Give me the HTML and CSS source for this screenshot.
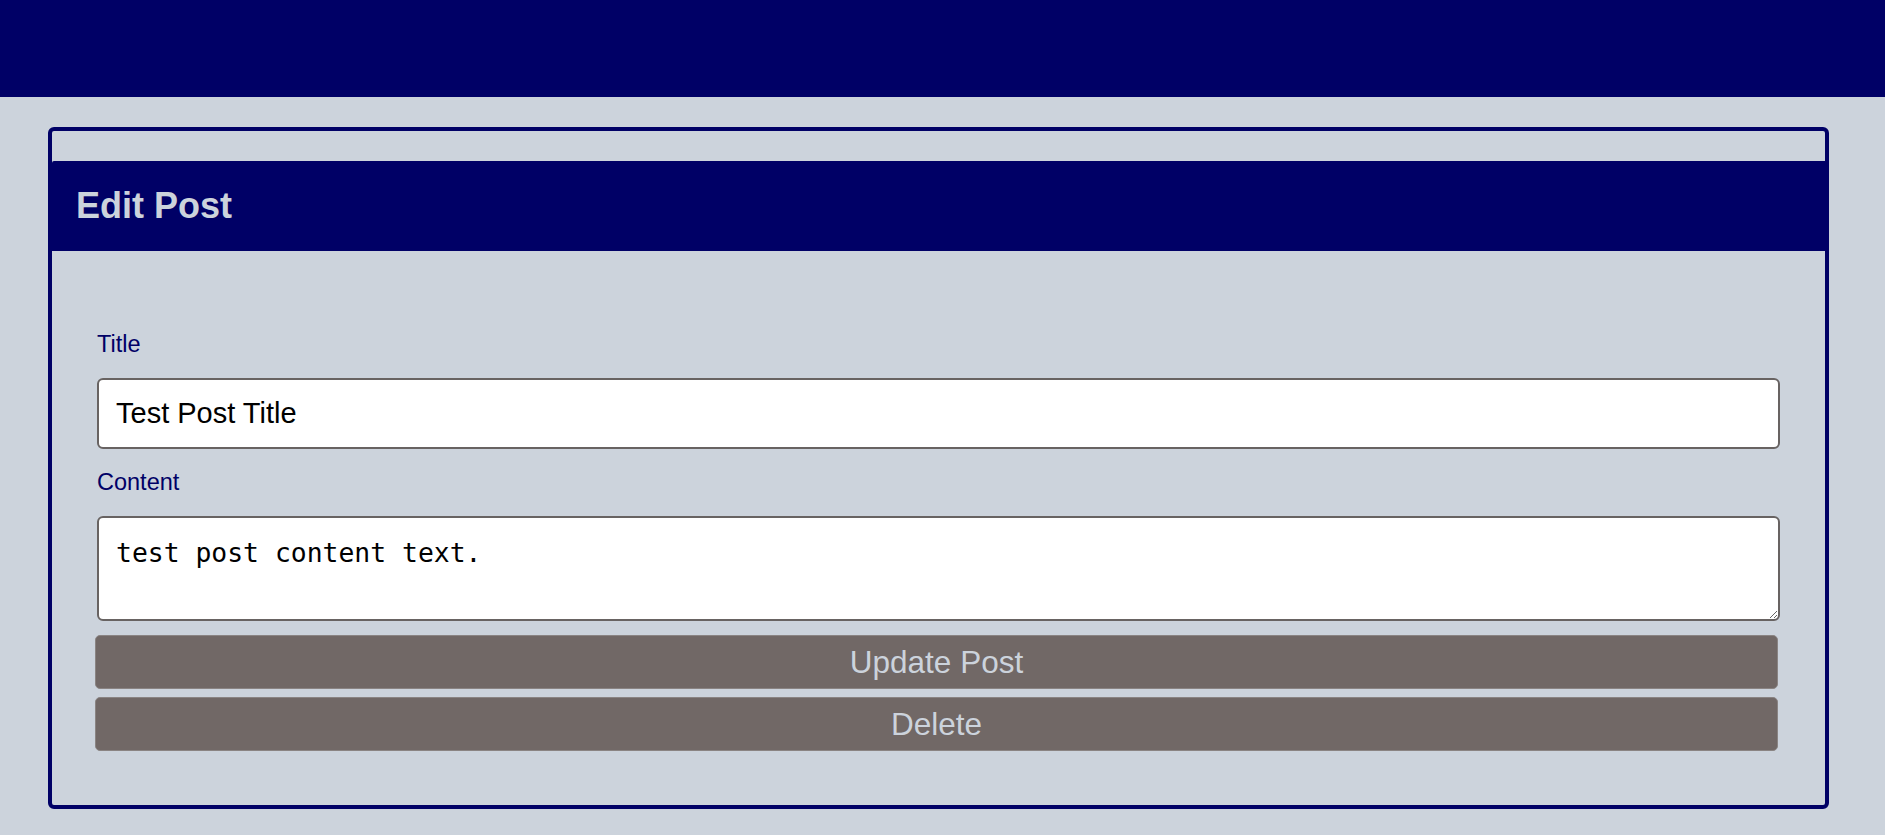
FILE: index.html
```html
<!DOCTYPE html>
<html lang="en">
<head>
<meta charset="utf-8">
<title>Edit Post</title>
<link rel="stylesheet" href="styles.css">
</head>
<body>
<header class="topbar"></header>
<main class="page">
  <section class="card">
    <div class="card-header">
      <h1 class="card-title">Edit Post</h1>
    </div>
    <form class="card-body">
      <label class="field-label" for="title">Title</label>
      <input class="field-input" id="title" type="text" value="Test Post Title">
      <label class="field-label" for="content">Content</label>
      <textarea class="field-textarea" id="content">test post content text.</textarea>
      <button class="btn btn-update" type="button">Update Post</button>
      <button class="btn" type="button">Delete</button>
    </form>
  </section>
</main>
</body>
</html>
```

FILE: styles.css
```css
html, body {
  margin: 0;
  padding: 0;
}

body {
  background: #ccd3dc;
  font-family: "Liberation Sans", Arial, sans-serif;
  min-height: 835px;
}

.topbar {
  height: 97px;
  background: #000066;
}

.page {
  padding: 30px 56px 0 48px;
}

.card {
  border: 4px solid #000066;
  border-radius: 6px;
  padding-top: 30px;
}

.card-header {
  background: #000066;
  height: 90px;
  margin-right: -4px;
  border-top-left-radius: 2px;
  border-top-right-radius: 2px;
  box-sizing: border-box;
  padding: 25px 24px;
}

.card-title {
  margin: 0;
  font-size: 36px;
  line-height: 40px;
  font-weight: bold;
  color: #ccd3dc;
}

.card-body {
  display: flex;
  flex-direction: column;
  padding: 80px 45px 54px;
}

.field-label {
  display: block;
  font-size: 23.5px;
  line-height: 26px;
  color: #000066;
  margin-bottom: 21px;
}

.field-input,
.field-textarea {
  display: block;
  width: 100%;
  box-sizing: border-box;
  border: 2px solid #686362;
  border-radius: 6px;
  background: #ffffff;
  color: #000000;
  margin: 0;
}

.field-input {
  height: 71px;
  padding: 0 17px;
  font-family: "Liberation Sans", Arial, sans-serif;
  font-size: 29px;
  margin-bottom: 20px;
}

.field-textarea {
  height: 105px;
  padding: 20px 17px 17px;
  font-family: "DejaVu Sans Mono", "Liberation Mono", monospace;
  font-size: 26.4px;
  line-height: 30px;
  margin-bottom: 14px;
}

.btn {
  display: block;
  box-sizing: border-box;
  height: 54px;
  margin: 0 2px 0 -2px;
  padding: 0;
  background: #716866;
  border: 1px solid #8a8483;
  border-radius: 5px;
  color: #ccd3dc;
  font-family: "Liberation Sans", Arial, sans-serif;
  font-size: 31.5px;
}

.btn-update {
  margin-bottom: 8px;
}
```
